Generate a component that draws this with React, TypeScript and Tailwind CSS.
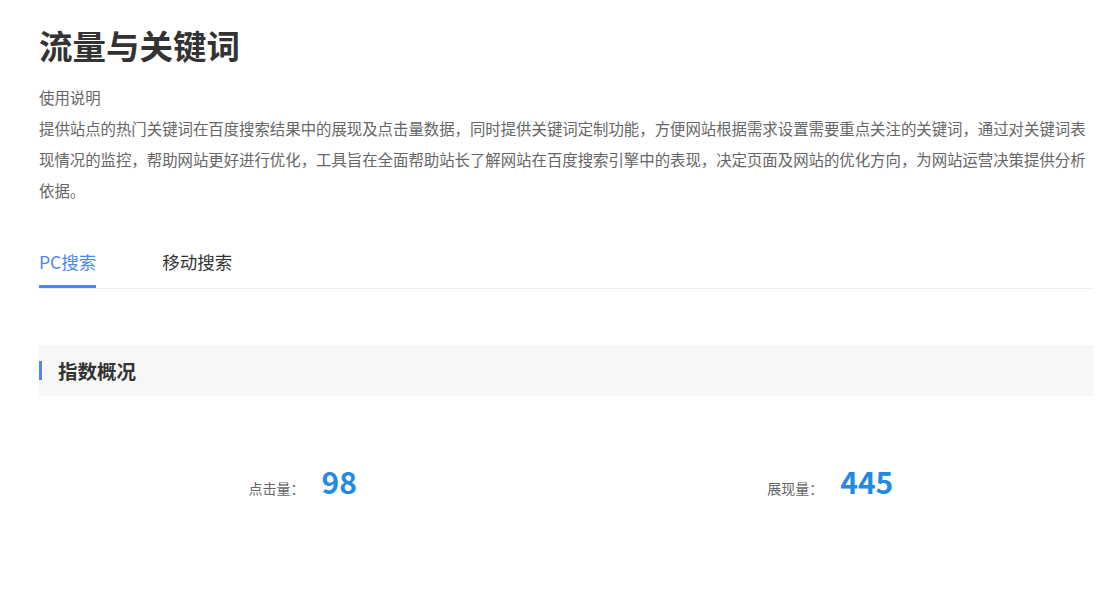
const font = { fontFamily: '"Noto Sans CJK SC", "Noto Sans", sans-serif' };

type Stat = {
  label: string;
  value: number;
};

const stats: Stat[] = [
  { label: "点击量：", value: 98 },
  { label: "展现量：", value: 445 },
];

export default function App() {
  return (
    <div className="min-h-[590px] w-[1108px] bg-white px-[39px]" style={font}>
      <div className="w-[1055px]">
        <h1 className="pt-[25px] text-[33.5px] font-bold leading-[40px] text-[#333]">流量与关键词</h1>

        <div className="mt-[17px] w-[1060px] text-[15.4px] leading-[31px] text-[#666]">
          <p>使用说明</p>
          <p>
            提供站点的热门关键词在百度搜索结果中的展现及点击量数据，同时提供关键词定制功能，方便网站根据需求设置需要重点关注的关键词，通过对关键词表现情况的监控，帮助网站更好进行优化，工具旨在全面帮助站长了解网站在百度搜索引擎中的表现，决定页面及网站的优化方向，为网站运营决策提供分析依据。
          </p>
        </div>

        {/* tabs */}
        <div className="mt-[44px] flex gap-[66px] border-b border-[#eeeeee] text-[17.5px] leading-[24px]">
          <div className="border-b-[3px] border-[#4e86f7] pb-[11px] text-[#4e86f7]">PC搜索</div>
          <div className="pb-[14px] text-[#333]">移动搜索</div>
        </div>

        {/* section header */}
        <div className="mt-[56px] flex h-[51px] items-center bg-[#f7f7f7]">
          <span className="h-[19px] w-[3px] bg-[#4e86f7]" />
          <h2 className="ml-4 text-[19.5px] font-bold text-[#333]">指数概况</h2>
        </div>

        <div className="mt-[67px] grid grid-cols-2">
          {stats.map((s) => (
            <div key={s.label} className="flex items-baseline justify-center">
              <span className="text-[14px] text-[#666]">{s.label}</span>
              <span className="ml-[17px] text-[30px] font-bold leading-[36px] text-[#2389e6]">{s.value}</span>
            </div>
          ))}
        </div>
      </div>
    </div>
  );
}
